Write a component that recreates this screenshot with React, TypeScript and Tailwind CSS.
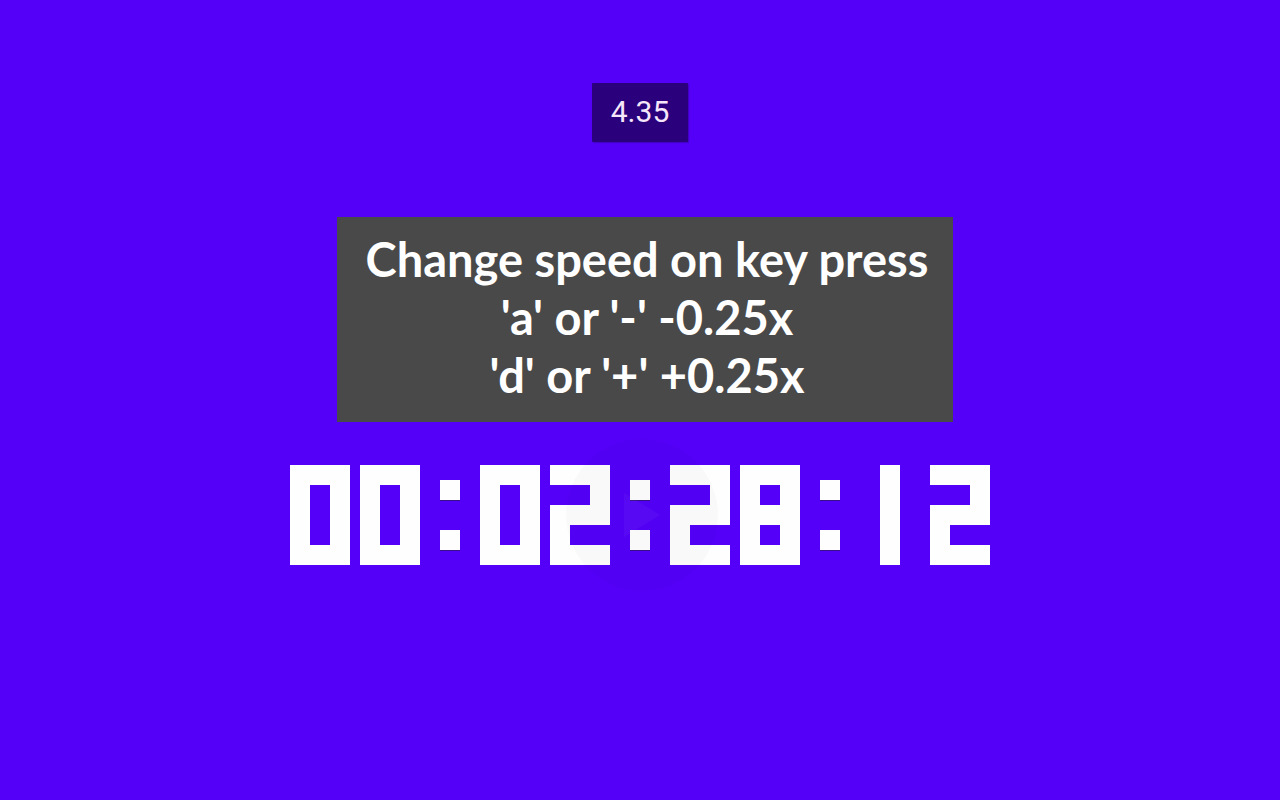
const GLYPHS: Record<string, string[]> = {
  "0": ["111", "101", "101", "101", "111"],
  "1": ["010", "010", "010", "010", "010"],
  "2": ["111", "001", "111", "100", "111"],
  "8": ["111", "101", "111", "101", "111"],
};

function Digit({ value }: { value: string }) {
  return (
    <span className="grid grid-cols-[repeat(3,20px)] auto-rows-[20px]">
      {GLYPHS[value]
        .join("")
        .split("")
        .map((cell, i) => (
          <span key={i} className={cell === "1" ? "bg-[#fefefe]" : ""} />
        ))}
    </span>
  );
}

function Pair({ value }: { value: string }) {
  return (
    <span className="flex gap-[10px]">
      {value.split("").map((digit, i) => (
        <Digit key={i} value={digit} />
      ))}
    </span>
  );
}

function Colon() {
  return (
    <span className="flex flex-col justify-between py-[15px]">
      <span className="size-5 bg-[#fefefe] shadow-[0_1px_0_#38108c]" />
      <span className="size-5 bg-[#fefefe] shadow-[0_1px_0_#38108c]" />
    </span>
  );
}

function Clock({ time }: { time: string }) {
  return (
    <div role="timer" aria-label={time} className="flex gap-5">
      {time.split(/(:)/).map((part, i) =>
        part === ":" ? <Colon key={i} /> : <Pair key={i} value={part} />
      )}
    </div>
  );
}

export default function App() {
  return (
    <main className="flex min-h-screen flex-col items-center bg-[#5400f8] pt-[83px]">
      <output className="rounded-[1px] bg-[#2a007c] px-[19px] pt-[11px] pb-[13px] font-['Roboto',sans-serif] text-[30px] leading-[35px] text-[#f5e6fa] shadow-[1px_1px_1px_#4300c4]">
        4.35
      </output>

      <section className="mt-[75px] ml-[10px] bg-[#494949] pt-[13px] pr-[25px] pb-[18px] pl-[29px] text-center font-['Lato',sans-serif] text-[47px] leading-[58px] font-bold text-white">
        <p>Change speed on key press</p>
        <p>'a' or '-' -0.25x</p>
        <p>'d' or '+' +0.25x</p>
      </section>

      <div className="relative mt-[43px]">
        <Clock time="00:02:28:12" />
        <div className="pointer-events-none absolute inset-0 flex items-center justify-center pl-1">
          <button
            type="button"
            aria-label="Play"
            className="pointer-events-auto flex size-[152px] shrink-0 items-center justify-center rounded-full bg-black/[0.02]"
          >
            <svg viewBox="0 0 36 44" className="h-11 w-9" aria-hidden="true">
              <path d="M0 0 36 22 0 44Z" fill="white" fillOpacity="0.035" />
            </svg>
          </button>
        </div>
      </div>
    </main>
  );
}
